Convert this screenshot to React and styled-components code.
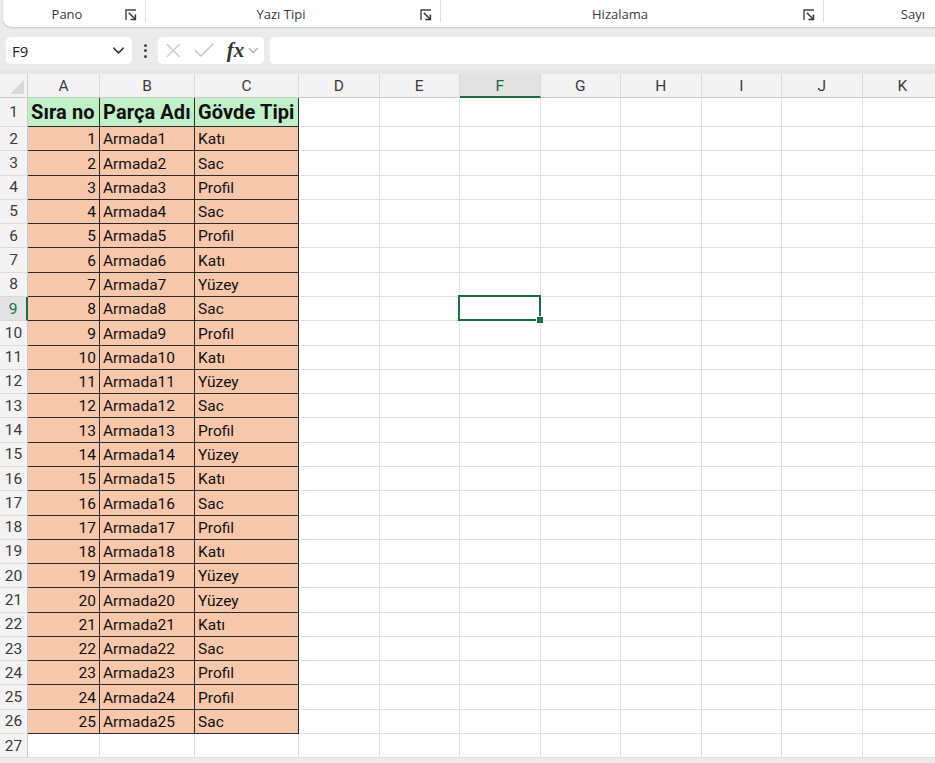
import React from "react";
import styled, { createGlobalStyle } from "styled-components";
import { ChevronDown, X, Check } from "lucide-react";

const GREEN = "#1f6b43";

const rows = [
  [1, "Armada1", "Katı"],
  [2, "Armada2", "Sac"],
  [3, "Armada3", "Profil"],
  [4, "Armada4", "Sac"],
  [5, "Armada5", "Profil"],
  [6, "Armada6", "Katı"],
  [7, "Armada7", "Yüzey"],
  [8, "Armada8", "Sac"],
  [9, "Armada9", "Profil"],
  [10, "Armada10", "Katı"],
  [11, "Armada11", "Yüzey"],
  [12, "Armada12", "Sac"],
  [13, "Armada13", "Profil"],
  [14, "Armada14", "Yüzey"],
  [15, "Armada15", "Katı"],
  [16, "Armada16", "Sac"],
  [17, "Armada17", "Profil"],
  [18, "Armada18", "Katı"],
  [19, "Armada19", "Yüzey"],
  [20, "Armada20", "Yüzey"],
  [21, "Armada21", "Katı"],
  [22, "Armada22", "Sac"],
  [23, "Armada23", "Profil"],
  [24, "Armada24", "Profil"],
  [25, "Armada25", "Sac"],
];

const columns = ["A", "B", "C", "D", "E", "F", "G", "H", "I", "J", "K"];
const emptyCols = 8;

const Global = createGlobalStyle`
  html, body {
    margin: 0;
    background: #ebebeb;
    font-family: "Segoe UI", "Open Sans", "Noto Sans", sans-serif;
    overflow: hidden;
  }
`;

const Page = styled.div`
  width: 935px;
  height: 763px;
  overflow: hidden;
  display: flex;
  flex-direction: column;
`;

const Ribbon = styled.div`
  height: 27px;
  margin-left: 3px;
  background: #fff;
  border-bottom-left-radius: 9px;
  box-shadow: 0 1px 2px rgba(0, 0, 0, 0.18);
  display: flex;
  align-items: flex-start;
  flex-shrink: 0;
`;

const Group = styled.div`
  width: ${(p) => p.$w}px;
  flex-shrink: 0;
  height: 22px;
  display: flex;
  align-items: center;
  padding-left: ${(p) => p.$pl || 0}px;
  box-sizing: border-box;
  border-right: ${(p) => (p.$last ? "none" : "1px solid #dedede")};
`;

const GroupLabel = styled.div`
  flex: 1;
  text-align: ${(p) => p.$align || "center"};
  font-size: 13px;
  color: #3a3a3a;
  padding-top: 6px;
  padding-right: ${(p) => p.$pr || 0}px;
`;

const Launcher = styled.svg`
  width: 12px;
  height: 12px;
  margin: 8px 8px 0 4px;
`;

const DialogLauncher = () => (
  <Launcher viewBox="0 0 12 12">
    <path d="M1 11V1h10" fill="none" stroke="#444" strokeWidth="1.4" />
    <path d="M3.8 3.8L10 10" stroke="#333" strokeWidth="1.5" />
    <path d="M5.5 10.4h4.9V5.5" fill="none" stroke="#333" strokeWidth="1.5" />
  </Launcher>
);

const FormulaBar = styled.div`
  display: flex;
  align-items: center;
  height: 27px;
  margin: 10px 0 6px 6px;
  flex-shrink: 0;
`;

const NameBox = styled.div`
  width: 126px;
  height: 27px;
  box-sizing: border-box;
  background: #fff;
  border-radius: 5px;
  display: flex;
  align-items: center;
  justify-content: space-between;
  padding: 0 4px 0 6px;
  font-size: 15px;
  color: #222;
`;

const Dots = styled.div`
  width: 26px;
  display: flex;
  flex-direction: column;
  align-items: center;
  gap: 2.5px;
  span {
    width: 3px;
    height: 3px;
    border-radius: 50%;
    background: #444;
  }
`;

const FxBox = styled.div`
  width: 106px;
  height: 27px;
  box-sizing: border-box;
  background: #fff;
  border-radius: 5px;
  display: flex;
  align-items: center;
  padding: 0 2px 0 3px;
  gap: 6px;
  color: #c3c3c3;
`;

const Fx = styled.span`
  font-family: "Liberation Serif", "DejaVu Serif", serif;
  font-style: italic;
  font-weight: bold;
  font-size: 21px;
  color: #333;
  margin-left: 3px;
  margin-right: -5px;
`;

const FormulaInput = styled.div`
  flex: 1;
  height: 27px;
  margin-left: 6px;
  background: #fff;
  border-radius: 5px 0 0 5px;
`;

const Sheet = styled.div`
  display: grid;
  grid-template-columns: 28px 72px 95px 104px repeat(${emptyCols}, 80.5px);
  grid-template-rows: 24px 29px repeat(26, 24.29px);
  background: #fff;
  border-top: 4px solid #e6e6e6;
  font-family: "Roboto", "Liberation Sans", sans-serif;
`;

const Corner = styled.div`
  background: #f3f3f3;
  border-right: 1px solid #d0d0d0;
  border-bottom: 1px solid #c8c8c8;
  position: relative;
  &::after {
    content: "";
    position: absolute;
    right: 3px;
    bottom: 3px;
    width: 0;
    height: 0;
    border-left: 14px solid transparent;
    border-bottom: 14px solid #d8d8d8;
  }
`;

const ColHead = styled.div`
  background: ${(p) => (p.$active ? "#e3e3e3" : "#f3f3f3")};
  color: ${(p) => (p.$active ? GREEN : "#3c3c3c")};
  border-right: 1px solid #dadada;
  border-bottom: ${(p) => (p.$active ? `2px solid ${GREEN}` : "1px solid #c8c8c8")};
  font-size: 15.5px;
  display: flex;
  align-items: center;
  justify-content: center;
  box-sizing: border-box;
  padding-top: 1px;
`;

const RowHead = styled.div`
  background: ${(p) => (p.$active ? "#e3e3e3" : "#f3f3f3")};
  color: ${(p) => (p.$active ? GREEN : "#3c3c3c")};
  border-right: ${(p) => (p.$active ? `2px solid ${GREEN}` : "1px solid #c8c8c8")};
  border-bottom: 1px solid #dadada;
  font-size: 15.5px;
  display: flex;
  align-items: center;
  justify-content: center;
  box-sizing: border-box;
`;

const fills = {
  head: "#c1f0c8",
  body: "#f7c7ac",
};

const Cell = styled.div`
  background: ${(p) => (p.$fill ? fills[p.$fill] : "#fff")};
  border-right: 1px solid ${(p) => (p.$boxed ? "#2a2a2a" : "#e1e1e1")};
  border-bottom: 1px solid ${(p) => (p.$boxed ? "#2a2a2a" : "#e1e1e1")};
  box-sizing: border-box;
  display: flex;
  align-items: flex-end;
  justify-content: ${(p) => (p.$right ? "flex-end" : "flex-start")};
  padding: 0 3px 2px 3px;
  font-size: ${(p) => (p.$bold ? "20px" : "15.5px")};
  font-weight: ${(p) => (p.$bold ? 700 : 400)};
  letter-spacing: ${(p) => (p.$bold ? "0.1px" : "0")};
  color: #111;
  white-space: nowrap;
  position: relative;
`;

const Selected = styled.div`
  position: absolute;
  z-index: 2;
  top: -2px;
  left: -2px;
  right: -1px;
  bottom: -1px;
  border: 2px solid ${GREEN};
  &::after {
    content: "";
    position: absolute;
    right: -5px;
    bottom: -5px;
    width: 6px;
    height: 6px;
    background: ${GREEN};
    border: 1px solid #fff;
  }
`;

const SEL_ROW = 9;
const SEL_COL = 5;

function EmptyCells({ row }) {
  return Array.from({ length: emptyCols }, (_, i) => (
    <Cell key={i}>{row === SEL_ROW && i + 3 === SEL_COL && <Selected />}</Cell>
  ));
}

export default function App() {
  return (
    <Page>
      <Global />
      <Ribbon>
        <Group $w={143} $pl={10}>
          <GroupLabel>Pano</GroupLabel>
          <DialogLauncher />
        </Group>
        <Group $w={295}>
          <GroupLabel>Yazı Tipi</GroupLabel>
          <DialogLauncher />
        </Group>
        <Group $w={383}>
          <GroupLabel>Hizalama</GroupLabel>
          <DialogLauncher />
        </Group>
        <Group $w={120} $last>
          <GroupLabel $align="right" $pr={19}>
            Sayı
          </GroupLabel>
        </Group>
      </Ribbon>

      <FormulaBar>
        <NameBox>
          F9
          <ChevronDown size={19} color="#333" strokeWidth={1.8} />
        </NameBox>
        <Dots>
          <span />
          <span />
          <span />
        </Dots>
        <FxBox>
          <X size={25} strokeWidth={1.3} />
          <Check size={27} strokeWidth={1.3} />
          <Fx>fx</Fx>
          <ChevronDown size={17} strokeWidth={1.5} color="#999" />
        </FxBox>
        <FormulaInput />
      </FormulaBar>

      <Sheet>
        <Corner />
        {columns.map((c, i) => (
          <ColHead key={c} $active={i === SEL_COL}>
            {c}
          </ColHead>
        ))}

        <RowHead>1</RowHead>
        <Cell $fill="head" $boxed $bold>Sıra no</Cell>
        <Cell $fill="head" $boxed $bold>Parça Adı</Cell>
        <Cell $fill="head" $boxed $bold>Gövde Tipi</Cell>
        <EmptyCells row={1} />

        {rows.map(([n, name, type], i) => (
          <React.Fragment key={n}>
            <RowHead $active={i + 2 === SEL_ROW}>{i + 2}</RowHead>
            <Cell $fill="body" $boxed $right>{n}</Cell>
            <Cell $fill="body" $boxed>{name}</Cell>
            <Cell $fill="body" $boxed>{type}</Cell>
            <EmptyCells row={i + 2} />
          </React.Fragment>
        ))}

        <RowHead>27</RowHead>
        <Cell />
        <Cell />
        <Cell />
        <EmptyCells row={27} />
      </Sheet>
    </Page>
  );
}
